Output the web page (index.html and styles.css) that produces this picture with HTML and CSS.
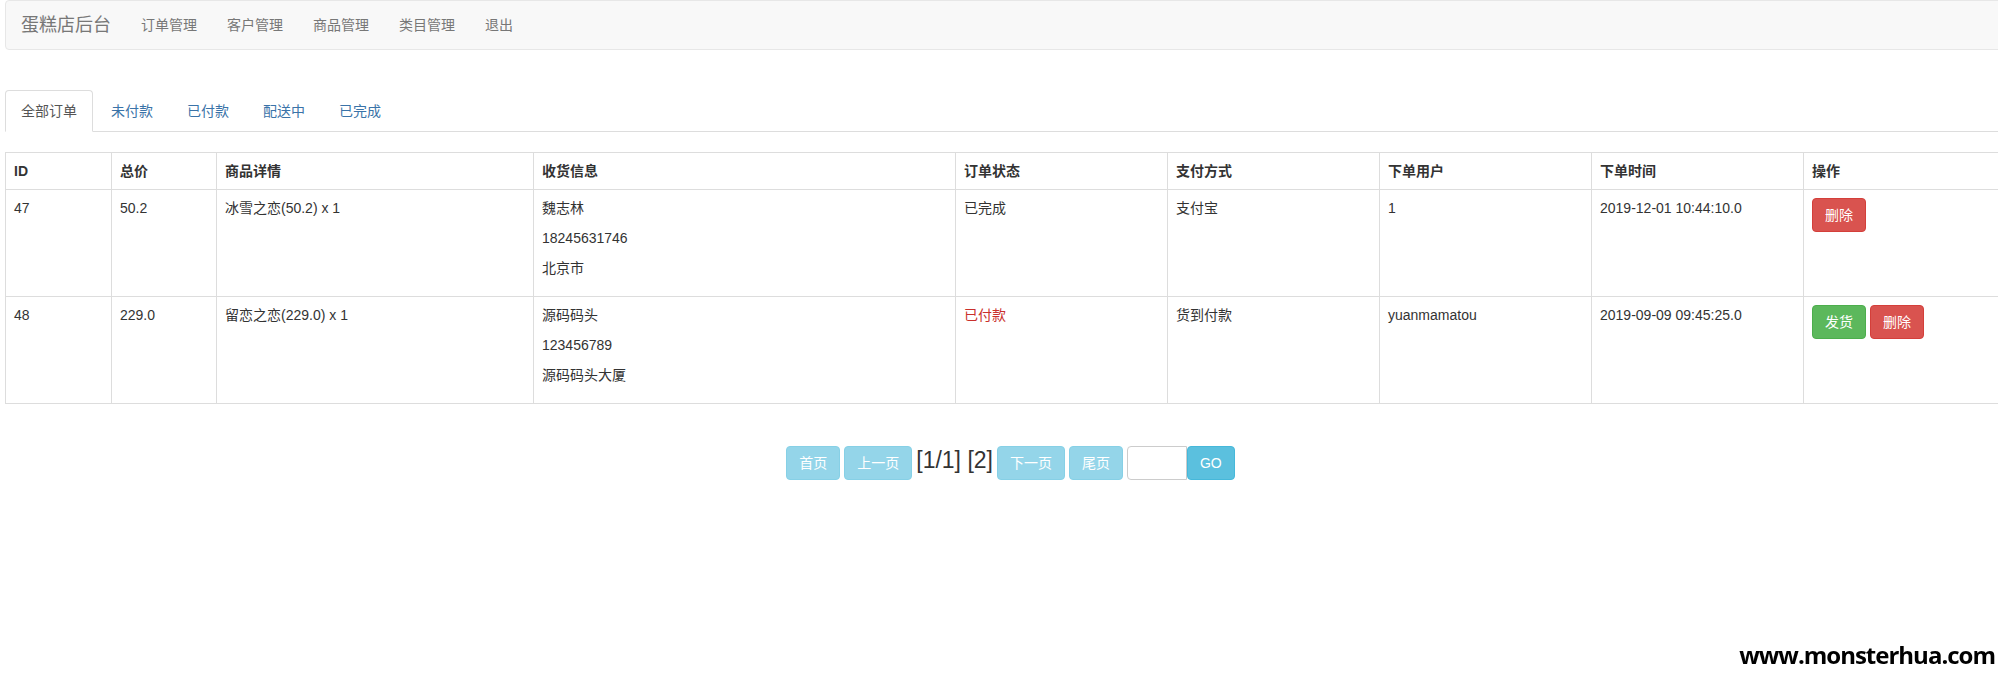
FILE: index.html
```html
<!DOCTYPE html>
<html lang="zh-CN">
<head>
    <meta charset="UTF-8">
    <title>蛋糕店后台 - 订单管理</title>
    <link rel="stylesheet" href="styles.css">
</head>
<body>

    <div class="page">
        <!-- 顶部导航 -->
        <nav class="navbar">
            <a class="brand" href="#">蛋糕店后台</a>
            <ul class="nav-links">
                <li><a href="#">订单管理</a></li>
                <li><a href="#">客户管理</a></li>
                <li><a href="#">商品管理</a></li>
                <li><a href="#">类目管理</a></li>
                <li><a href="#">退出</a></li>
            </ul>
        </nav>

        <!-- 订单状态切换 -->
        <ul class="tabs">
            <li class="active"><a href="#">全部订单</a></li>
            <li><a href="#">未付款</a></li>
            <li><a href="#">已付款</a></li>
            <li><a href="#">配送中</a></li>
            <li><a href="#">已完成</a></li>
        </ul>

        <table class="orders">
            <colgroup>
                <col class="c-id">
                <col class="c-total">
                <col class="c-goods">
                <col class="c-addr">
                <col class="c-mid">
                <col class="c-mid">
                <col class="c-mid">
                <col class="c-mid">
                <col class="c-last">
            </colgroup>
            <thead>
                <tr>
                    <th>ID</th>
                    <th>总价</th>
                    <th>商品详情</th>
                    <th>收货信息</th>
                    <th>订单状态</th>
                    <th>支付方式</th>
                    <th>下单用户</th>
                    <th>下单时间</th>
                    <th>操作</th>
                </tr>
            </thead>
            <tbody>
                <tr>
                    <td>47</td>
                    <td>50.2</td>
                    <td>冰雪之恋(50.2) x 1</td>
                    <td>
                        <p>魏志林</p>
                        <p>18245631746</p>
                        <p>北京市</p>
                    </td>
                    <td>已完成</td>
                    <td>支付宝</td>
                    <td>1</td>
                    <td>2019-12-01 10:44:10.0</td>
                    <td>
                        <a class="btn btn-danger" href="#">删除</a>
                    </td>
                </tr>
                <tr>
                    <td>48</td>
                    <td>229.0</td>
                    <td>留恋之恋(229.0) x 1</td>
                    <td>
                        <p>源码码头</p>
                        <p>123456789</p>
                        <p>源码码头大厦</p>
                    </td>
                    <td class="unpaid">已付款</td>
                    <td>货到付款</td>
                    <td>yuanmamatou</td>
                    <td>2019-09-09 09:45:25.0</td>
                    <td>
                        <a class="btn btn-success" href="#">发货</a>
                        <a class="btn btn-danger" href="#">删除</a>
                    </td>
                </tr>
            </tbody>
        </table>

        <!-- 分页 -->
        <div class="pager">
            <a class="btn btn-info disabled" href="#">首页</a>
            <a class="btn btn-info disabled" href="#">上一页</a>
            <span class="page-num">[1/1] [2]</span>
            <a class="btn btn-info disabled" href="#">下一页</a>
            <a class="btn btn-info disabled" href="#">尾页</a>
            <div class="jump">
                <input type="text" class="jump-input">
                <a class="btn btn-info" href="#">GO</a>
            </div>
        </div>
    </div>

    <div class="watermark">www.monsterhua.com</div>

</body>
</html>
```

FILE: styles.css
```css
/* --- 基础 --- */
html, body {
    margin: 0;
    overflow: hidden;
}

body {
    font-family: "Liberation Sans", Arial, "Noto Sans CJK SC", sans-serif;
    font-size: 14px;
    line-height: 20px;
    color: #333;
    background-color: #fff;
}

a {
    text-decoration: none;
}

/* 页面比窗口略宽，右侧被截掉 */
.page {
    width: 2011px;
    margin-left: 5px;
}

/* --- 顶部导航 --- */
.navbar {
    display: flex;
    align-items: center;
    box-sizing: border-box;
    height: 50px;
    background-color: #f8f8f8;
    border: 1px solid #e7e7e7;
    border-radius: 4px;
}

.brand {
    padding: 0 15px;
    font-size: 18px;
    color: #777;
}

.nav-links {
    display: flex;
    list-style: none;
    margin: 0;
    padding: 0;
}

.nav-links a {
    display: block;
    padding: 0 15px;
    color: #777;
}

/* --- 标签页 --- */
.tabs {
    display: flex;
    list-style: none;
    margin: 40px 0 0 0;
    padding: 0;
    border-bottom: 1px solid #ddd;
}

.tabs li {
    margin-bottom: -1px;
    margin-right: 2px;
}

.tabs a {
    display: block;
    padding: 10px 15px;
    border: 1px solid transparent;
    border-radius: 4px 4px 0 0;
    color: #3a73a8;
}

.tabs .active a {
    color: #555;
    background-color: #fff;
    border-color: #ddd;
    border-bottom-color: transparent;
}

/* --- 订单表格 --- */
.orders {
    width: 100%;
    margin-top: 20px;
    border-collapse: collapse;
    table-layout: fixed;
}

.c-id { width: 106px; }
.c-total { width: 105px; }
.c-goods { width: 317px; }
.c-addr { width: 422px; }
.c-mid { width: 212px; }
.c-last { width: 213px; }

.orders th,
.orders td {
    padding: 8px;
    border: 1px solid #ddd;
    text-align: left;
    vertical-align: top;
}

.orders th {
    font-weight: bold;
}

.orders p {
    margin: 0 0 10px 0;
}

.orders .unpaid {
    color: #c9302c;
}

/* --- 按钮 --- */
.btn {
    display: inline-block;
    padding: 6px 12px;
    font-size: 14px;
    line-height: 20px;
    color: #fff;
    border: 1px solid transparent;
    border-radius: 4px;
}

.btn-danger {
    background-color: #d9534f;
    border-color: #d43f3a;
}

.btn-success {
    background-color: #5cb85c;
    border-color: #4cae4c;
}

.btn-info {
    background-color: #5bc0de;
    border-color: #46b8da;
}

.btn.disabled {
    opacity: 0.65;
}

/* --- 分页 --- */
.pager {
    display: flex;
    justify-content: center;
    align-items: center;
    gap: 4px;
    margin-top: 42px;
}

.page-num {
    font-size: 23px;
    line-height: 30px;
    margin-top: -6px;
}

.jump {
    display: flex;
}

.jump-input {
    box-sizing: border-box;
    width: 60px;
    height: 34px;
    margin: 0;
    border: 1px solid #ccc;
    border-radius: 4px 0 0 4px;
}

/* --- 水印 --- */
.watermark {
    position: fixed;
    right: 3px;
    top: 645px;
    font-family: "Open Sans", sans-serif;
    font-weight: 700;
    font-size: 24px;
    letter-spacing: -1px;
    color: #000;
}
```
